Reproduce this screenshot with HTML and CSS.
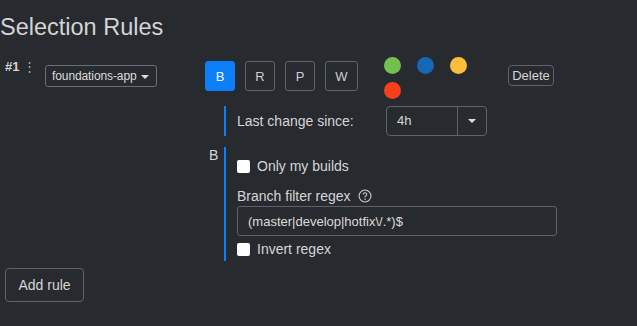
FILE: index.html
```html
<!DOCTYPE html>
<html lang="en">
<head>
  <meta charset="UTF-8">
  <title>Selection Rules</title>
  <link rel="stylesheet" href="styles.css">
</head>
<body>
  <h2 class="title">Selection Rules</h2>

  <div class="rule">
    <div class="rule-num">#1 <span class="kebab">&#8942;</span></div>
    <div class="rule-main">
      <div class="rule-head">
        <button class="dropdown">foundations-app <span class="caret"></span></button>
        <div class="types">
          <button class="type active">B</button>
          <button class="type">R</button>
          <button class="type">P</button>
          <button class="type wide">W</button>
        </div>
        <div class="colors">
          <span class="dot green"></span>
          <span class="dot blue"></span>
          <span class="dot yellow"></span>
          <span class="dot red"></span>
        </div>
        <button class="btn small">Delete</button>
      </div>

      <div class="section">
        <div class="section-tag"></div>
        <div class="section-body row">
          <label class="field-label">Last change since:</label>
          <div class="combo">
            <span class="combo-value">4h</span>
            <span class="combo-btn"><span class="caret"></span></span>
          </div>
        </div>
      </div>

      <div class="section second">
        <div class="section-tag">B</div>
        <div class="section-body">
          <label class="check"><span class="box"></span>Only my builds</label>
          <div class="field-label regex-label">Branch filter regex
            <svg class="help" width="14" height="14" viewBox="0 0 16 16">
              <circle cx="8" cy="8" r="6.8" fill="none" stroke="currentColor" stroke-width="1.2"/>
              <path d="M6 6.3a2 2 0 1 1 2.8 1.8c-.6.3-.8.7-.8 1.3v.4" fill="none" stroke="currentColor" stroke-width="1.2"/>
              <circle cx="8" cy="11.6" r=".85" fill="currentColor"/>
            </svg>
          </div>
          <input class="text-input" type="text" value="(master|develop|hotfix\/.*)$">
          <label class="check"><span class="box"></span>Invert regex</label>
        </div>
      </div>
    </div>
  </div>

  <button class="btn add">Add rule</button>
</body>
</html>
```

FILE: styles.css
```css
body {
  margin: 0;
  padding: 0 5px;
  background: #272a2f;
  color: #d6d6d6;
  font-family: "Liberation Sans", Arial, sans-serif;
  font-size: 14px;
}
.title {
  margin: 12px 0 0 -5px;
  font-size: 23.5px;
  font-weight: normal;
  color: #d4d4d4;
  line-height: 30px;
}
.rule {
  display: flex;
  margin-top: 15px;
}
.rule-num {
  width: 40px;
  font-weight: bold;
  font-size: 13px;
  padding-top: 2px;
}
.kebab {
  font-weight: normal;
  color: #aaa;
}
.rule-main {
  flex: 1;
}
.rule-head {
  display: flex;
  align-items: flex-start;
}
.dropdown {
  margin-top: 8px;
  height: 22px;
  width: 112px;
  padding: 0 6px;
  background: transparent;
  border: 1px solid #6b6e78;
  border-radius: 3px;
  color: #dcdcdc;
  font-family: inherit;
  font-size: 12px;
  letter-spacing: -0.1px;
  white-space: nowrap;
  text-align: left;
}
.caret {
  display: inline-block;
  width: 0;
  height: 0;
  border-left: 4px solid transparent;
  border-right: 4px solid transparent;
  border-top: 4px solid #ddd;
  vertical-align: middle;
  margin-left: 1px;
}
.types {
  display: flex;
  gap: 10px;
  margin-left: 48px;
  margin-top: 4px;
}
.type {
  width: 30px;
  height: 30px;
  padding: 0;
  background: transparent;
  border: 1px solid #5f626b;
  border-radius: 3px;
  color: #cfcfcf;
  font-family: inherit;
  font-size: 13px;
}
.type.wide {
  width: 33px;
}
.type.active {
  background: #0d7ff7;
  border-color: #0d7ff7;
  color: #fff;
}
.colors {
  display: flex;
  flex-wrap: wrap;
  width: 100px;
  gap: 8px 16px;
  margin-left: 26px;
}
.dot {
  width: 17px;
  height: 17px;
  border-radius: 50%;
}
.green { background: #74c04f; }
.blue { background: #1767b4; }
.yellow { background: #fbbd3b; }
.red { background: #f6401c; }
.btn {
  background: transparent;
  border: 1px solid #5f626b;
  border-radius: 4px;
  color: #d6d6d6;
  font-family: inherit;
  cursor: pointer;
}
.btn.small {
  margin-left: 24px;
  margin-top: 8px;
  height: 21px;
  width: 46px;
  padding: 0;
  font-size: 13px;
}
.section {
  display: flex;
  margin-left: 164px;
}
.section-tag {
  width: 15px;
  font-size: 14px;
  color: #d6d6d6;
}
.section-body {
  border-left: 2px solid #0d7ff7;
  padding-left: 11px;
}
.row {
  display: flex;
  align-items: center;
  margin-top: 7px;
  height: 30px;
}
.row .field-label {
  width: 149px;
}
.field-label {
  font-size: 14px;
  color: #d6d6d6;
}
.combo {
  display: flex;
  width: 99px;
  height: 28px;
  border: 1px solid #5f626b;
  border-radius: 4px;
}
.combo-value {
  flex: 1;
  padding: 6px 10px;
  font-size: 13px;
  border-right: 1px solid #5f626b;
}
.combo-btn {
  width: 28px;
  display: flex;
  align-items: center;
  justify-content: center;
}
.combo-btn .caret {
  margin: 0;
}
.second {
  margin-top: 11px;
}
.second .section-body {
  width: 320px;
  padding-top: 11px;
  padding-bottom: 4px;
}
.check {
  display: flex;
  align-items: center;
  font-size: 14px;
  height: 16px;
}
.box {
  width: 13px;
  height: 13px;
  background: #fff;
  border-radius: 2px;
  margin-right: 7px;
}
.regex-label {
  margin-top: 14px;
  display: flex;
  align-items: center;
  gap: 7px;
}
.help {
  color: #cfcfcf;
}
.text-input {
  display: block;
  box-sizing: border-box;
  width: 320px;
  height: 30px;
  margin-top: 2px;
  padding: 0 10px;
  background: transparent;
  border: 1px solid #5f626b;
  border-radius: 3px;
  color: #dcdcdc;
  font-family: inherit;
  font-size: 13px;
}
.text-input + .check {
  margin-top: 5px;
}
.btn.add {
  margin-top: 7px;
  height: 34px;
  width: 79px;
  font-size: 14px;
}
```
